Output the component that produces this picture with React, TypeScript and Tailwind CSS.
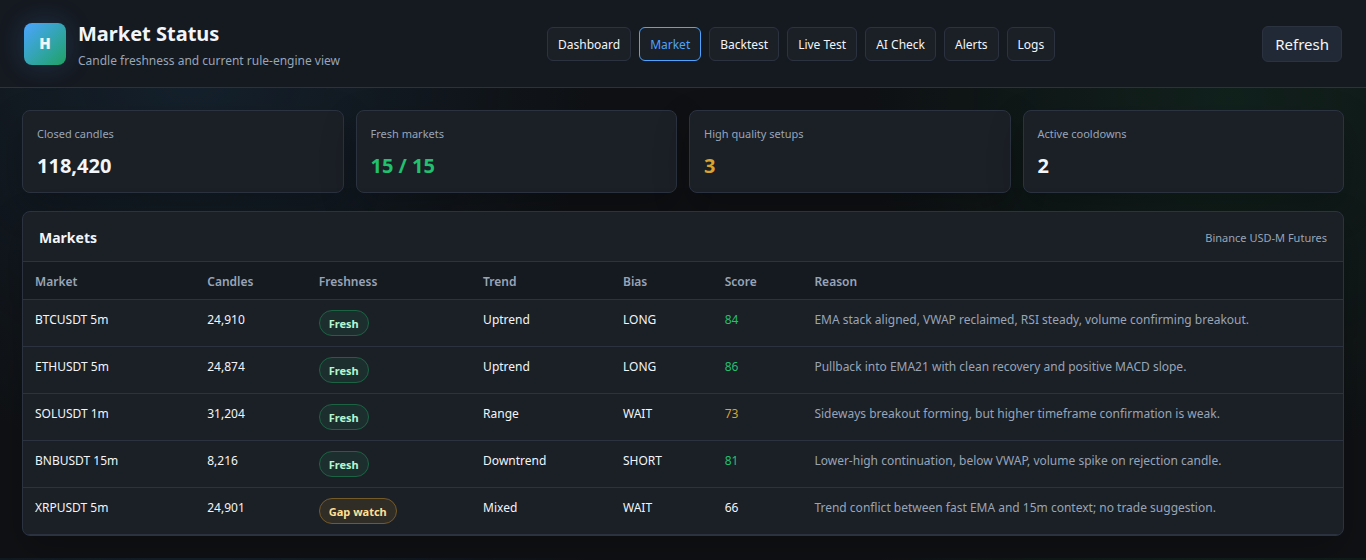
import React from "react";

type Tone = "good" | "warn" | "plain";

const toneText: Record<Tone, string> = {
  good: "text-[#22c06f]",
  warn: "text-[#d8a32f]",
  plain: "text-[#f2f5f9]",
};

const navItems = ["Dashboard", "Market", "Backtest", "Live Test", "AI Check", "Alerts", "Logs"];

const stats: { label: string; value: string; tone: Tone }[] = [
  { label: "Closed candles", value: "118,420", tone: "plain" },
  { label: "Fresh markets", value: "15 / 15", tone: "good" },
  { label: "High quality setups", value: "3", tone: "warn" },
  { label: "Active cooldowns", value: "2", tone: "plain" },
];

const columns = [
  { name: "Market", width: "w-[13.05%]" },
  { name: "Candles", width: "w-[8.45%]" },
  { name: "Freshness", width: "w-[12.45%]" },
  { name: "Trend", width: "w-[10.6%]" },
  { name: "Bias", width: "w-[7.7%]" },
  { name: "Score", width: "w-[6.8%]" },
  { name: "Reason", width: "" },
];

const rows: {
  market: string;
  candles: string;
  fresh: boolean;
  trend: string;
  bias: string;
  score: string;
  tone: Tone;
  reason: string;
}[] = [
  { market: "BTCUSDT 5m", candles: "24,910", fresh: true, trend: "Uptrend", bias: "LONG", score: "84", tone: "good", reason: "EMA stack aligned, VWAP reclaimed, RSI steady, volume confirming breakout." },
  { market: "ETHUSDT 5m", candles: "24,874", fresh: true, trend: "Uptrend", bias: "LONG", score: "86", tone: "good", reason: "Pullback into EMA21 with clean recovery and positive MACD slope." },
  { market: "SOLUSDT 1m", candles: "31,204", fresh: true, trend: "Range", bias: "WAIT", score: "73", tone: "warn", reason: "Sideways breakout forming, but higher timeframe confirmation is weak." },
  { market: "BNBUSDT 15m", candles: "8,216", fresh: true, trend: "Downtrend", bias: "SHORT", score: "81", tone: "good", reason: "Lower-high continuation, below VWAP, volume spike on rejection candle." },
  { market: "XRPUSDT 5m", candles: "24,901", fresh: false, trend: "Mixed", bias: "WAIT", score: "66", tone: "plain", reason: "Trend conflict between fast EMA and 15m context; no trade suggestion." },
];

function Badge({ fresh }: { fresh: boolean }) {
  const tone = fresh
    ? "border-[#1c6343] bg-[#1c2f2e] text-[#b5f5d0]"
    : "border-[#755a29] bg-[#302c26] text-[#ffdf94]";
  return (
    <span className={`inline-flex h-[26px] items-center rounded-full border px-[9px] text-[11px] font-bold ${tone}`}>
      {fresh ? "Fresh" : "Gap watch"}
    </span>
  );
}

export default function App() {
  return (
    <div className="min-h-screen bg-[#0f1114] bg-[radial-gradient(circle_at_14%_12%,rgba(62,150,220,0.12),transparent_32%),radial-gradient(circle_at_90%_18%,rgba(34,170,100,0.11),transparent_28%)] bg-[length:100%_558px] font-['Noto_Sans',sans-serif] text-[#f2f5f9]">
      <header className="flex items-center justify-between gap-4 border-b border-[#2b3341] bg-[#151920] px-6 py-[18px]">
        <div className="flex items-center gap-3">
          <div className="grid size-[42px] shrink-0 place-items-center rounded-lg bg-linear-135 from-[#4da3ff] to-[#22a05f] text-[15px] font-black shadow-[0_0_28px_rgba(77,163,255,0.2)]">
            H
          </div>
          <div>
            <h1 className="text-xl leading-[31px] font-bold">Market Status</h1>
            <p className="mt-1 text-xs leading-4 text-[#98a5b7]">Candle freshness and current rule-engine view</p>
          </div>
        </div>
        <nav className="flex gap-2" aria-label="Main">
          {navItems.map((item) => (
            <a
              key={item}
              href="#"
              aria-current={item === "Market" ? "page" : undefined}
              className={`rounded-md border bg-[#1b1f26] px-[10px] pt-[9px] pb-[7px] text-xs leading-4 whitespace-nowrap ${
                item === "Market" ? "border-[#4da3ff] text-[#4da3ff]" : "border-[#2b3341]"
              }`}
            >
              {item}
            </a>
          ))}
        </nav>
        <button type="button" className="rounded-md border border-[#2b3341] bg-[#222936] px-3 py-[5px] text-[15px] leading-6">
          Refresh
        </button>
      </header>

      <main className="flex flex-col gap-[18px] p-[22px]">
        <section className="grid grid-cols-4 gap-3">
          {stats.map((stat) => (
            <div key={stat.label} className="rounded-lg border border-[#2b3341] bg-[#1b1f26] p-[14px] shadow-[0_14px_36px_rgba(0,0,0,0.22)]">
              <div className="text-[11px] leading-[18px] text-[#98a5b7]">{stat.label}</div>
              <div className={`mt-[10px] text-xl leading-[25px] font-bold ${toneText[stat.tone]}`}>{stat.value}</div>
            </div>
          ))}
        </section>

        <section className="overflow-hidden rounded-lg border border-[#2b3341] bg-[#1b1f26] shadow-[0_14px_36px_rgba(0,0,0,0.22)]">
          <div className="flex items-center justify-between border-b border-[#2b3341] px-4 pt-[15px] pb-[13px]">
            <h2 className="text-sm leading-[21px] font-bold">Markets</h2>
            <span className="text-[11px] leading-4 text-[#98a5b7]">Binance USD-M Futures</span>
          </div>
          <table className="w-full table-fixed border-collapse text-left text-xs leading-[19px]">
            <thead className="bg-[#151920] text-[#98a5b7]">
              <tr className="border-b border-[#2b3341]">
                {columns.map((column) => (
                  <th key={column.name} scope="col" className={`px-3 pt-[10px] pb-2 font-semibold ${column.width}`}>
                    {column.name}
                  </th>
                ))}
              </tr>
            </thead>
            <tbody>
              {rows.map((row) => (
                <tr key={row.market} className="border-b border-[#2b3341] align-top">
                  <td className="px-3 py-[10px]">{row.market}</td>
                  <td className="px-3 py-[10px]">{row.candles}</td>
                  <td className="px-3 py-[10px]">
                    <div className="flex">
                      <Badge fresh={row.fresh} />
                    </div>
                  </td>
                  <td className="px-3 py-[10px]">{row.trend}</td>
                  <td className="px-3 py-[10px]">{row.bias}</td>
                  <td className={`px-3 py-[10px] ${toneText[row.tone]}`}>{row.score}</td>
                  <td className="px-3 py-[10px] text-[#98a5b7]">{row.reason}</td>
                </tr>
              ))}
            </tbody>
          </table>
        </section>
      </main>
    </div>
  );
}
